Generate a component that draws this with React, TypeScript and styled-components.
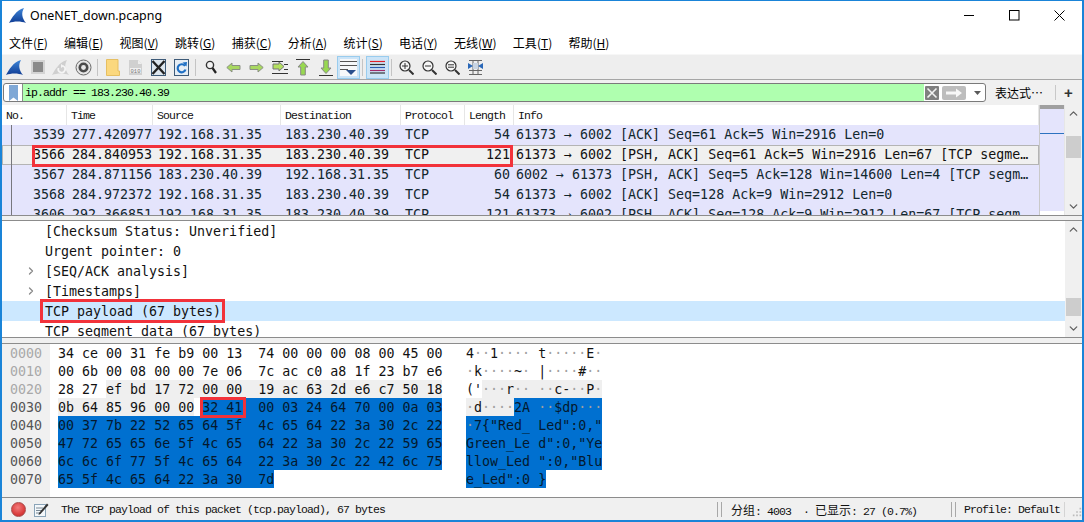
import React from 'react';
import styled, { createGlobalStyle, css } from 'styled-components';
import { ChevronUp, ChevronDown, ChevronRight } from 'lucide-react';

const CJK = '"Noto Sans CJK SC", "Noto Sans", sans-serif';
const MONO = '"DejaVu Sans Mono", monospace';
const SLAB = '"Liberation Mono", "Noto Sans CJK SC", monospace';

const Global = createGlobalStyle`
  html, body { margin: 0; padding: 0; background: #fff; }
  #root { width: 1084px; height: 522px; overflow: hidden; }
`;

const Win = styled.div`
  box-sizing: border-box;
  width: 1084px;
  height: 522px;
  border: 2px solid #1a84d8;
  border-top-width: 1px;
  background: #f0f0f0;
  display: flex;
  flex-direction: column;
  overflow: hidden;
  font-family: ${CJK};
`;

const TitleBar = styled.div`
  height: 29px;
  flex: none;
  background: #fff;
  display: flex;
  align-items: center;
  padding-left: 7px;
`;
const TitleText = styled.div`
  margin-left: 4px;
  font: 12.4px "Noto Sans", sans-serif;
  color: #000;
  flex: 1;
`;
const WinBtn = styled.div`
  width: 45px;
  height: 29px;
  display: flex;
  align-items: center;
  justify-content: center;
`;

const MenuBar = styled.div`
  height: 24px;
  flex: none;
  background: #fff;
  display: flex;
  align-items: center;
  padding-left: 7px;
  font-size: 12px;
  color: #000;
`;
const MenuItem = styled.div`
  margin-right: 16.3px;
  white-space: nowrap;
  u { text-underline-offset: 1px; }
`;

const Toolbar = styled.div`
  height: 26px;
  flex: none;
  box-sizing: border-box;
  background: #eeeeee;
  border-top: 1px solid #f7f7f7;
  border-bottom: 1px solid #a6a6a6;
  display: flex;
  align-items: center;
  padding-left: 1px;
`;
const ToolBtn = styled.div<{ $on?: boolean }>`
  box-sizing: border-box;
  width: 23px;
  height: 23px;
  flex: none;
  display: flex;
  align-items: center;
  justify-content: center;
  ${(p) => p.$on && css`
    background: #cce4f7;
    border: 1px solid #99ccee;
  `}
`;
const ToolSep = styled.div`
  width: 1px;
  height: 17px;
  background: #c4c4c4;
  flex: none;
  margin: 0 3px 0 2px;
`;

const FilterRow = styled.div`
  height: 25px;
  flex: none;
  display: flex;
  align-items: center;
  padding-left: 1px;
  background: #f0f0f0;
`;
const FilterBox = styled.div`
  box-sizing: border-box;
  width: 983px;
  height: 19px;
  border: 1px solid #7a7a7a;
  border-radius: 3px;
  background: #fff;
  display: flex;
  align-items: center;
  overflow: hidden;
`;
const Bookmark = styled.div`
  width: 18px;
  height: 17px;
  flex: none;
  display: flex;
  align-items: center;
  justify-content: center;
  border-right: 1px solid #8a8a8a;
`;
const FilterInput = styled.div`
  flex: 1;
  height: 17px;
  background: #afffaf;
  font: 11.5px/17px ${SLAB};
  letter-spacing: -0.9px;
  padding-left: 2px;
  white-space: pre;
  color: #000;
`;
const FilterIcons = styled.div`
  display: flex;
  align-items: center;
  width: 60px;
  flex: none;
  padding-left: 1px;
  gap: 3px;
`;
const DropArrow = styled.svg`
  margin-left: 4px;
`;
const ExprLabel = styled.div`
  margin-left: 9px;
  width: 60px;
  font-size: 12px;
  color: #000;
  white-space: nowrap;
`;
const PlusSep = styled.div`
  width: 1px;
  height: 15px;
  background: #c8c8c8;
`;
const Plus = styled.div`
  margin-left: 8px;
  font: bold 15px "Liberation Sans", sans-serif;
  color: #333;
`;

const Pane = styled.div<{ $h: number; $top?: boolean }>`
  position: relative;
  height: ${(p) => p.$h}px;
  flex: none;
  display: flex;
  background: #fff;
  border-bottom: 1px solid #8c8c8c;
  border-top: ${(p) => (p.$top ? '1px solid #8c8c8c' : 'none')};
  overflow: hidden;
`;
const PaneBody = styled.div`
  flex: 1;
  min-width: 0;
  overflow: hidden;
  position: relative;
`;
const Gap = styled.div<{ $h: number }>`
  height: ${(p) => p.$h}px;
  flex: none;
  background: #f0f0f0;
`;

const columns = '65px 86px 128px 120px 64px 49px 1fr';
const HeaderRow = styled.div`
  display: grid;
  grid-template-columns: ${columns};
  height: 20px;
  background: #fff;
  font: 11.5px/22px ${SLAB};
  letter-spacing: -0.9px;
  color: #111;
`;
const HeaderCell = styled.div`
  padding-left: 4px;
  border-right: 1px solid #e6e6e6;
  overflow: hidden;
`;
const PacketRow = styled.div<{ $sel?: boolean }>`
  display: grid;
  grid-template-columns: ${columns};
  box-sizing: border-box;
  height: 20px;
  background: #e4e4fc;
  font: 13.3px/20px ${MONO};
  color: #12272e;
  white-space: pre;
  ${(p) => p.$sel && css`
    background: #f0f0f0;
    box-shadow: inset 0 0 0 1px #b4b4b4;
    color: #111;
  `}
`;
const Cell = styled.div<{ $right?: boolean; $pad?: number }>`
  overflow: hidden;
  text-align: ${(p) => (p.$right ? 'right' : 'left')};
  ${(p) => (p.$right ? 'padding-right' : 'padding-left')}: ${(p) => p.$pad ?? 5}px;
`;
const TreeLine = styled.div`
  position: absolute;
  left: 9px;
  top: 20px;
  bottom: 0;
  width: 1px;
  background: #77777d;
`;
const MiniMap = styled.div`
  width: 26px;
  flex: none;
  box-sizing: border-box;
  border-left: 1px solid #c9c9c9;
  border-right: 1px solid #e6e6e6;
  display: flex;
  flex-direction: column;
  background: #e4e4fc;
`;
const MiniHead = styled.div`
  height: 4px;
  background: #a0a0a0;
`;
const MiniCursor = styled.div`
  height: 1px;
  margin-top: 24px;
  background: #2c72c0;
`;
const MiniFill = styled.div`
  flex: 1;
`;
const MiniEnd = styled.div`
  height: 4px;
  background: #fff;
`;

const ScrollBar = styled.div<{ $thumbTop: number; $thumbH: number }>`
  position: relative;
  width: 17px;
  flex: none;
  background: #f0f0f0;
  display: flex;
  flex-direction: column;
  justify-content: space-between;
  align-items: center;
  color: #606060;
  &::after {
    content: '';
    position: absolute;
    left: 1px;
    right: 1px;
    top: ${(p) => p.$thumbTop}px;
    height: ${(p) => p.$thumbH}px;
    background: #cdcdcd;
  }
`;
const ArrowCap = styled.div`
  height: 17px;
  display: flex;
  align-items: center;
  justify-content: center;
`;

const DetailRow = styled.div<{ $sel?: boolean }>`
  box-sizing: border-box;
  height: 20px;
  padding: 1px 0 0 43px;
  position: relative;
  font: 13.3px/20px ${MONO};
  color: #111;
  white-space: pre;
  background: ${(p) => (p.$sel ? '#cce8ff' : 'transparent')};
`;
const Expander = styled.div`
  position: absolute;
  left: 23px;
  top: 4px;
  color: #8a8a8a;
  display: flex;
`;

const HexPane = styled.div`
  flex: 1;
  display: flex;
  font: 13.3px/20px ${MONO};
  white-space: pre;
  color: #111;
  background: #fff;
  border-top: 1px solid #8c8c8c;
  overflow: hidden;
  position: relative;
`;
const OffsetCol = styled.div`
  width: 48px;
  flex: none;
  box-sizing: border-box;
  padding-left: 8px;
  background: #f0f0f0;
`;
const Offset = styled.div<{ $on?: boolean }>`
  height: 18px;
  color: ${(p) => (p.$on ? '#555' : '#a8a8a8')};
`;
const BytesCol = styled.div`
  width: 408px;
  flex: none;
  padding-left: 8px;
`;
const AsciiCol = styled.div`
  flex: 1;
`;
const ByteLine = styled.div`
  height: 18px;
`;
const Mark = styled.span<{ $mark: number }>`
  display: inline-block;
  height: 18px;
  vertical-align: top;
  background: ${(p) => (p.$mark === 2 ? '#0070d0' : p.$mark === 1 ? '#efefef' : 'transparent')};
  color: ${(p) => (p.$mark === 2 ? '#04192e' : '#111')};
`;
const Dot = styled.span`
  color: #a0a0a0;
`;

const RedBox = styled.div<{ $x: number; $y: number; $w: number; $h: number }>`
  position: absolute;
  box-sizing: border-box;
  left: ${(p) => p.$x}px;
  top: ${(p) => p.$y}px;
  width: ${(p) => p.$w}px;
  height: ${(p) => p.$h}px;
  border: 3px solid #f2323a;
  pointer-events: none;
`;

const StatusBar = styled.div`
  height: 23px;
  flex: none;
  box-sizing: border-box;
  border-top: 1px solid #8c8c8c;
  display: flex;
  align-items: center;
  background: #f0f0f0;
  font: 11.5px ${SLAB};
  color: #111;
  white-space: pre;
`;
const StatusSlab = styled.span`
  letter-spacing: -0.9px;
`;
const StatusCjk = styled.span`
  font: 12px ${CJK};
`;
const RedDot = styled.div`
  width: 13px;
  height: 13px;
  border-radius: 50%;
  margin-left: 9px;
  flex: none;
  background: radial-gradient(circle at 45% 35%, #f27c7c, #d93a3a 65%, #b52a2a);
  border: 1px solid #a84a4a;
`;
const EditSlot = styled.div`
  margin-left: 8px;
  display: flex;
`;
const StatusMsg = styled.div`
  width: 656px;
  flex: none;
  margin-left: 12px;
  letter-spacing: -0.9px;
`;
const StatusSep = styled.div`
  width: 3px;
  height: 15px;
  flex: none;
  border-left: 1px solid #a8a8a8;
  border-right: 1px solid #a8a8a8;
`;
const StatusCount = styled.div`
  width: 229px;
  flex: none;
  padding-left: 9px;
  box-sizing: border-box;
`;
const StatusProfile = styled.div`
  margin-left: 8px;
  width: 100px;
  flex: none;
  letter-spacing: -0.9px;
`;
const StatusThin = styled.div`
  width: 1px;
  height: 15px;
  flex: none;
  background: #d4d4d4;
`;
const Grip = styled.svg`
  margin-left: 7px;
  align-self: flex-end;
  margin-bottom: 2px;
`;

const Fin = () => (
  <svg width="17" height="17" viewBox="0 0 17 17">
    <defs>
      <linearGradient id="finblue" x1="0" y1="0" x2="0" y2="1">
        <stop offset="0" stopColor="#3f86d8" />
        <stop offset="1" stopColor="#0f3c94" />
      </linearGradient>
    </defs>
    <path d="M0 16 C3 11 7 3 15 1 C12 6 13 11 17 16 C12 14 5 14 0 16Z" fill="url(#finblue)" />
  </svg>
);

const IconStop = () => (
  <svg width="16" height="16" viewBox="0 0 16 16">
    <rect x="1" y="1" width="14" height="14" fill="#d4d4d4" />
    <rect x="3" y="3" width="10" height="10" fill="#8a8a8a" />
  </svg>
);
const IconRestart = () => (
  <svg width="17" height="17" viewBox="0 0 17 17">
    <path d="M0 16 C3 11 7 3 15 1 C12 6 13 11 17 16 C12 14 5 14 0 16Z" fill="#cfcfcf" />
    <path d="M11 7 A3.4 3.4 0 1 1 6.5 9" fill="none" stroke="#f4f4f4" strokeWidth="1.8" />
    <path d="M9 5 L12 7 L9 9Z" fill="#f4f4f4" />
  </svg>
);
const IconOptions = () => (
  <svg width="17" height="17" viewBox="0 0 17 17">
    <circle cx="8.5" cy="8.5" r="7.5" fill="#e6e6e6" stroke="#6a6a6a" />
    <circle cx="8.5" cy="8.5" r="5" fill="#4a4a4a" />
    <circle cx="8.5" cy="8.5" r="2.4" fill="#e8e8e8" />
  </svg>
);
const IconFolder = () => (
  <svg width="14" height="17" viewBox="0 0 14 17">
    <path d="M.5.5 H12 V12 H13.5 V16.5 H.5Z" fill="#fbd87e" stroke="#e6bf62" />
  </svg>
);
const IconFile = () => (
  <svg width="15" height="17" viewBox="0 0 15 17">
    <path d="M1 1 H10 L14 5 V16 H1Z" fill="#d0d0d0" />
    <path d="M10 1 V5 H14" fill="#eee" />
    <rect x="2" y="9" width="11" height="5" fill="#f0f0f0" />
    <text x="7.5" y="13.5" fontSize="5.5" textAnchor="middle" fontFamily="Liberation Mono" fill="#777">010</text>
  </svg>
);
const IconClose = () => (
  <svg width="15" height="17" viewBox="0 0 15 17">
    <rect x=".5" y=".5" width="14" height="16" fill="#dde6ee" stroke="#3d5a78" />
    <path d="M1.5 2 L13.5 15 M13.5 2 L1.5 15" stroke="#222" strokeWidth="2.4" />
  </svg>
);
const IconReload = () => (
  <svg width="15" height="17" viewBox="0 0 15 17">
    <rect x=".5" y=".5" width="14" height="16" fill="#e6edf4" stroke="#3d5a78" />
    <path d="M11 7 A4 4 0 1 0 11.5 10.5" fill="none" stroke="#1e6fc4" strokeWidth="2.2" />
    <path d="M8.5 3.5 L12.5 7.5 L13 3Z" fill="#1e6fc4" />
  </svg>
);
const IconSearch = () => (
  <svg width="12" height="14" viewBox="0 0 12 14">
    <circle cx="5" cy="5" r="3.6" fill="#f4f4f4" stroke="#333" strokeWidth="1.4" />
    <path d="M7.5 8 L11 13" stroke="#222" strokeWidth="2.2" />
  </svg>
);
const ArrowSvg = styled.svg<{ $flip?: boolean }>`
  transform: ${(p) => (p.$flip ? 'scaleX(-1)' : 'none')};
`;
const IconBack = ({ flip = false }: { flip?: boolean }) => (
  <ArrowSvg $flip={flip} width="15" height="11" viewBox="0 0 15 11">
    <path d="M.8 5.5 L6 1 V3.5 H14 V7.5 H6 V10Z" fill="#a8d860" stroke="#8a8f84" />
  </ArrowSvg>
);
const IconGoto = () => (
  <svg width="16" height="15" viewBox="0 0 16 15">
    <path d="M0 1.5 H11 M0 13.5 H16 M12 9.5 H16 M12 4.5 H16" stroke="#333" />
    <path d="M1 4 H7 V2 L12 6.5 L7 11 V9 H1Z" fill="#b4e060" stroke="#777" />
  </svg>
);
const IconTop = () => (
  <svg width="14" height="17" viewBox="0 0 14 17">
    <path d="M0 .5 H14" stroke="#333" />
    <path d="M7 2.5 L12 8 H9.3 V16 H4.7 V8 H2Z" fill="#98d850" stroke="#888" />
  </svg>
);
const IconBottom = () => (
  <svg width="14" height="17" viewBox="0 0 14 17">
    <path d="M0 16.5 H14" stroke="#333" />
    <path d="M7 14.5 L12 9 H9.3 V1 H4.7 V9 H2Z" fill="#98d850" stroke="#888" />
  </svg>
);
const IconAutoscroll = () => (
  <svg width="17" height="17" viewBox="0 0 17 17">
    <rect x="0" y="0" width="17" height="17" fill="#f6f8fa" />
    <path d="M0 2.5 H17 M0 6.5 H17 M0 10.5 H8" stroke="#555" />
    <path d="M6 11 H16 L11 16Z" fill="#2a4f8c" />
  </svg>
);
const IconColorize = () => (
  <svg width="15" height="14" viewBox="0 0 15 14">
    <path d="M0 1.5 H15" stroke="#e0202a" strokeWidth="1.2" />
    <path d="M0 4.5 H15" stroke="#333" strokeWidth="1.2" />
    <path d="M0 7.5 H15" stroke="#2a5ab0" strokeWidth="1.2" />
    <path d="M0 10.5 H15" stroke="#a02a6a" strokeWidth="1.2" />
    <path d="M0 13 H15" stroke="#333" strokeWidth="1.2" />
  </svg>
);
const IconZoom = ({ kind }: { kind: 'in' | 'out' | 'reset' }) => (
  <svg width="15" height="15" viewBox="0 0 15 15">
    <circle cx="6" cy="6" r="5" fill="#f6f6f6" stroke="#333" strokeWidth="1.2" />
    <path d="M10 10 L14.5 14.5" stroke="#333" strokeWidth="2" />
    {kind === 'in' && <path d="M3 6 H9 M6 3 V9" stroke="#333" />}
    {kind === 'out' && <path d="M3 6 H9" stroke="#333" />}
    {kind === 'reset' && <path d="M3 4.8 H9 M3 7.2 H9" stroke="#333" />}
  </svg>
);
const IconResize = () => (
  <svg width="15" height="15" viewBox="0 0 15 15">
    <path d="M1 .5 H14 M1 14.5 H14 M1 10.5 H14 M5 0 V15 M10 0 V15" stroke="#666" />
    <path d="M0 3 L5 6 L0 9Z M15 3 L10 6 L15 9Z" fill="#2a68b8" />
    <rect x="5" y="3" width="5" height="6" fill="#c8d4e2" />
  </svg>
);
const IconEdit = () => (
  <svg width="15" height="15" viewBox="0 0 15 15">
    <rect x=".5" y="2.5" width="11" height="12" fill="#f4f8fb" stroke="#8aa4b8" />
    <path d="M2 6 H9 M2 8.5 H8 M2 11 H7" stroke="#7a8a96" />
    <path d="M5 11 L13 1.5 L14.5 3 L6.5 12 L4.5 13Z" fill="#333" />
  </svg>
);
const IconBookmark = () => (
  <svg width="9" height="16" viewBox="0 0 9 16">
    <path d="M0 0 H9 V16 L4.5 12.5 L0 16Z" fill="#7fa8d6" />
  </svg>
);

const packets = [
  ['3539', '277.420977', '192.168.31.35', '183.230.40.39', 'TCP', '54', '61373 → 6002 [ACK] Seq=61 Ack=5 Win=2916 Len=0'],
  ['3566', '284.840953', '192.168.31.35', '183.230.40.39', 'TCP', '121', '61373 → 6002 [PSH, ACK] Seq=61 Ack=5 Win=2916 Len=67 [TCP segme…'],
  ['3567', '284.871156', '183.230.40.39', '192.168.31.35', 'TCP', '60', '6002 → 61373 [PSH, ACK] Seq=5 Ack=128 Win=14600 Len=4 [TCP segm…'],
  ['3568', '284.972372', '192.168.31.35', '183.230.40.39', 'TCP', '54', '61373 → 6002 [ACK] Seq=128 Ack=9 Win=2912 Len=0'],
  ['3606', '292.366851', '192.168.31.35', '183.230.40.39', 'TCP', '121', '61373 → 6002 [PSH, ACK] Seq=128 Ack=9 Win=2912 Len=67 [TCP segm…'],
];

const headers = ['No.', 'Time', 'Source', 'Destination', 'Protocol', 'Length', 'Info'];

const details = [
  { text: '[Checksum Status: Unverified]' },
  { text: 'Urgent pointer: 0' },
  { text: '[SEQ/ACK analysis]', arrow: true },
  { text: '[Timestamps]', arrow: true },
  { text: 'TCP payload (67 bytes)', sel: true },
  { text: 'TCP segment data (67 bytes)' },
];

const dump = [
  '34 ce 00 31 fe b9 00 13 74 00 00 00 08 00 45 00',
  '00 6b 00 08 00 00 7e 06 7c ac c0 a8 1f 23 b7 e6',
  '28 27 ef bd 17 72 00 00 19 ac 63 2d e6 c7 50 18',
  '0b 64 85 96 00 00 32 41 00 03 24 64 70 00 0a 03',
  '00 37 7b 22 52 65 64 5f 4c 65 64 22 3a 30 2c 22',
  '47 72 65 65 6e 5f 4c 65 64 22 3a 30 2c 22 59 65',
  '6c 6c 6f 77 5f 4c 65 64 22 3a 30 2c 22 42 6c 75',
  '65 5f 4c 65 64 22 3a 30 7d',
];
const bytes = dump.join(' ').split(' ');

const markOf = (i: number) => (i >= 0x36 ? 2 : i >= 0x22 ? 1 : 0);

const HexRow = ({ row }: { row: number }) => {
  const parts: React.ReactNode[] = [];
  for (let c = 0; c < 16; c++) {
    const i = row * 16 + c;
    if (i >= bytes.length) break;
    parts.push(<Mark key={c} $mark={markOf(i)}>{bytes[i]}</Mark>);
    if (c < 15 && i + 1 < bytes.length) {
      const same = markOf(i) === markOf(i + 1);
      const gap = c === 7 ? '  ' : ' ';
      parts.push(<Mark key={`g${c}`} $mark={same ? markOf(i) : 0}>{gap}</Mark>);
    }
  }
  return <ByteLine>{parts}</ByteLine>;
};

const AsciiRow = ({ row }: { row: number }) => {
  const parts: React.ReactNode[] = [];
  for (let c = 0; c < 16; c++) {
    const i = row * 16 + c;
    if (i >= bytes.length) break;
    const v = parseInt(bytes[i], 16);
    const printable = v >= 0x20 && v < 0x7f;
    parts.push(
      <Mark key={c} $mark={markOf(i)}>
        {printable ? String.fromCharCode(v) : <Dot>·</Dot>}
      </Mark>
    );
    if (c === 7 && i + 1 < bytes.length) {
      const same = markOf(i) === markOf(i + 1);
      parts.push(<Mark key="g" $mark={same ? markOf(i) : 0}> </Mark>);
    }
  }
  return <ByteLine>{parts}</ByteLine>;
};

const menus: [string, string][] = [
  ['文件', 'F'], ['编辑', 'E'], ['视图', 'V'], ['跳转', 'G'], ['捕获', 'C'], ['分析', 'A'],
  ['统计', 'S'], ['电话', 'Y'], ['无线', 'W'], ['工具', 'T'], ['帮助', 'H'],
];

export default function App() {
  return (
    <Win>
      <Global />
      <TitleBar>
        <Fin />
        <TitleText>OneNET_down.pcapng</TitleText>
        <WinBtn>
          <svg width="11" height="11" viewBox="0 0 11 11"><path d="M0 5.5 H10" stroke="#000" /></svg>
        </WinBtn>
        <WinBtn>
          <svg width="11" height="11" viewBox="0 0 11 11"><rect x=".5" y=".5" width="9.5" height="9.5" fill="none" stroke="#000" /></svg>
        </WinBtn>
        <WinBtn>
          <svg width="11" height="11" viewBox="0 0 11 11"><path d="M.5 .5 L10.5 10.5 M10.5 .5 L.5 10.5" stroke="#000" /></svg>
        </WinBtn>
      </TitleBar>

      <MenuBar>
        {menus.map(([label, key]) => (
          <MenuItem key={key}>{label}(<u>{key}</u>)</MenuItem>
        ))}
      </MenuBar>

      <Toolbar>
        <ToolBtn><Fin /></ToolBtn>
        <ToolBtn><IconStop /></ToolBtn>
        <ToolBtn><IconRestart /></ToolBtn>
        <ToolBtn><IconOptions /></ToolBtn>
        <ToolSep />
        <ToolBtn><IconFolder /></ToolBtn>
        <ToolBtn><IconFile /></ToolBtn>
        <ToolBtn><IconClose /></ToolBtn>
        <ToolBtn><IconReload /></ToolBtn>
        <ToolSep />
        <ToolBtn><IconSearch /></ToolBtn>
        <ToolBtn><IconBack /></ToolBtn>
        <ToolBtn><IconBack flip /></ToolBtn>
        <ToolBtn><IconGoto /></ToolBtn>
        <ToolBtn><IconTop /></ToolBtn>
        <ToolBtn><IconBottom /></ToolBtn>
        <ToolBtn $on><IconAutoscroll /></ToolBtn>
        <ToolSep />
        <ToolBtn $on><IconColorize /></ToolBtn>
        <ToolSep />
        <ToolBtn><IconZoom kind="in" /></ToolBtn>
        <ToolBtn><IconZoom kind="out" /></ToolBtn>
        <ToolBtn><IconZoom kind="reset" /></ToolBtn>
        <ToolBtn><IconResize /></ToolBtn>
      </Toolbar>

      <FilterRow>
        <FilterBox>
          <Bookmark><IconBookmark /></Bookmark>
          <FilterInput>ip.addr == 183.230.40.39</FilterInput>
          <FilterIcons>
            <svg width="14" height="14" viewBox="0 0 14 14">
              <rect width="14" height="14" rx="1" fill="#808080" />
              <path d="M2.5 2.5 L11.5 11.5 M11.5 2.5 L2.5 11.5" stroke="#f2f2f2" strokeWidth="1.6" />
            </svg>
            <svg width="24" height="14" viewBox="0 0 24 14">
              <rect width="24" height="14" rx="2" fill="#bdbdbd" />
              <path d="M4 5.5 H14 V2.5 L20 7 L14 11.5 V8.5 H4Z" fill="#f7f7f7" />
            </svg>
            <DropArrow width="9" height="14" viewBox="0 0 9 14">
              <path d="M1 5 H8 L4.5 9Z" fill="#5a5a5a" />
            </DropArrow>
          </FilterIcons>
        </FilterBox>
        <ExprLabel>表达式…</ExprLabel>
        <PlusSep />
        <Plus>+</Plus>
      </FilterRow>

      <Pane $h={110}>
        <PaneBody>
          <HeaderRow>
            {headers.map((h) => <HeaderCell key={h}>{h}</HeaderCell>)}
          </HeaderRow>
          {packets.map((p, i) => (
            <PacketRow key={p[0]} $sel={i === 1}>
              <Cell $right $pad={2}>{p[0]}</Cell>
              <Cell>{p[1]}</Cell>
              <Cell>{p[2]}</Cell>
              <Cell $pad={4}>{p[3]}</Cell>
              <Cell $pad={4}>{p[4]}</Cell>
              <Cell $right $pad={4}>{p[5]}</Cell>
              <Cell $pad={2}>{p[6]}</Cell>
            </PacketRow>
          ))}
          <TreeLine />
          <RedBox $x={30} $y={40} $w={481} $h={22} />
        </PaneBody>
        <MiniMap>
          <MiniHead />
          <MiniCursor />
          <MiniFill />
          <MiniEnd />
        </MiniMap>
        <ScrollBar $thumbTop={31} $thumbH={22}>
          <ArrowCap><ChevronUp size={13} strokeWidth={2.4} /></ArrowCap>
          <ArrowCap><ChevronDown size={13} strokeWidth={2.4} /></ArrowCap>
        </ScrollBar>
      </Pane>

      <Gap $h={4} />

      <Pane $h={116} $top>
        <PaneBody>
          {details.map((d) => (
            <DetailRow key={d.text} $sel={d.sel}>
              {d.arrow && <Expander><ChevronRight size={12} strokeWidth={2.6} /></Expander>}
              {d.text}
            </DetailRow>
          ))}
          <RedBox $x={38} $y={78} $w={185} $h={24} />
        </PaneBody>
        <ScrollBar $thumbTop={77} $thumbH={18}>
          <ArrowCap><ChevronUp size={13} strokeWidth={2.4} /></ArrowCap>
          <ArrowCap><ChevronDown size={13} strokeWidth={2.4} /></ArrowCap>
        </ScrollBar>
      </Pane>

      <Gap $h={5} />

      <HexPane>
        <OffsetCol>
          {dump.map((_, r) => (
            <Offset key={r} $on={r >= 3}>{`00${r}0`}</Offset>
          ))}
        </OffsetCol>
        <BytesCol>
          {dump.map((_, r) => <HexRow key={r} row={r} />)}
        </BytesCol>
        <AsciiCol>
          {dump.map((_, r) => <AsciiRow key={r} row={r} />)}
        </AsciiCol>
        <RedBox $x={198} $y={53} $w={46} $h={21} />
      </HexPane>

      <StatusBar>
        <RedDot />
        <EditSlot><IconEdit /></EditSlot>
        <StatusMsg>The TCP payload of this packet (tcp.payload), 67 bytes</StatusMsg>
        <StatusSep />
        <StatusCount>
          <StatusCjk>分组</StatusCjk><StatusSlab>: 4003  · </StatusSlab>
          <StatusCjk>已显示</StatusCjk><StatusSlab>: 27 (0.7%)</StatusSlab>
        </StatusCount>
        <StatusSep />
        <StatusProfile>Profile: Default</StatusProfile>
        <StatusThin />
        <Grip width="12" height="12" viewBox="0 0 12 12">
          <path d="M9 1h2v2H9zM5 5h2v2H5zM9 5h2v2H9zM1 9h2v2H1zM5 9h2v2H5zM9 9h2v2H9z" fill="#bbb" />
        </Grip>
      </StatusBar>
    </Win>
  );
}
